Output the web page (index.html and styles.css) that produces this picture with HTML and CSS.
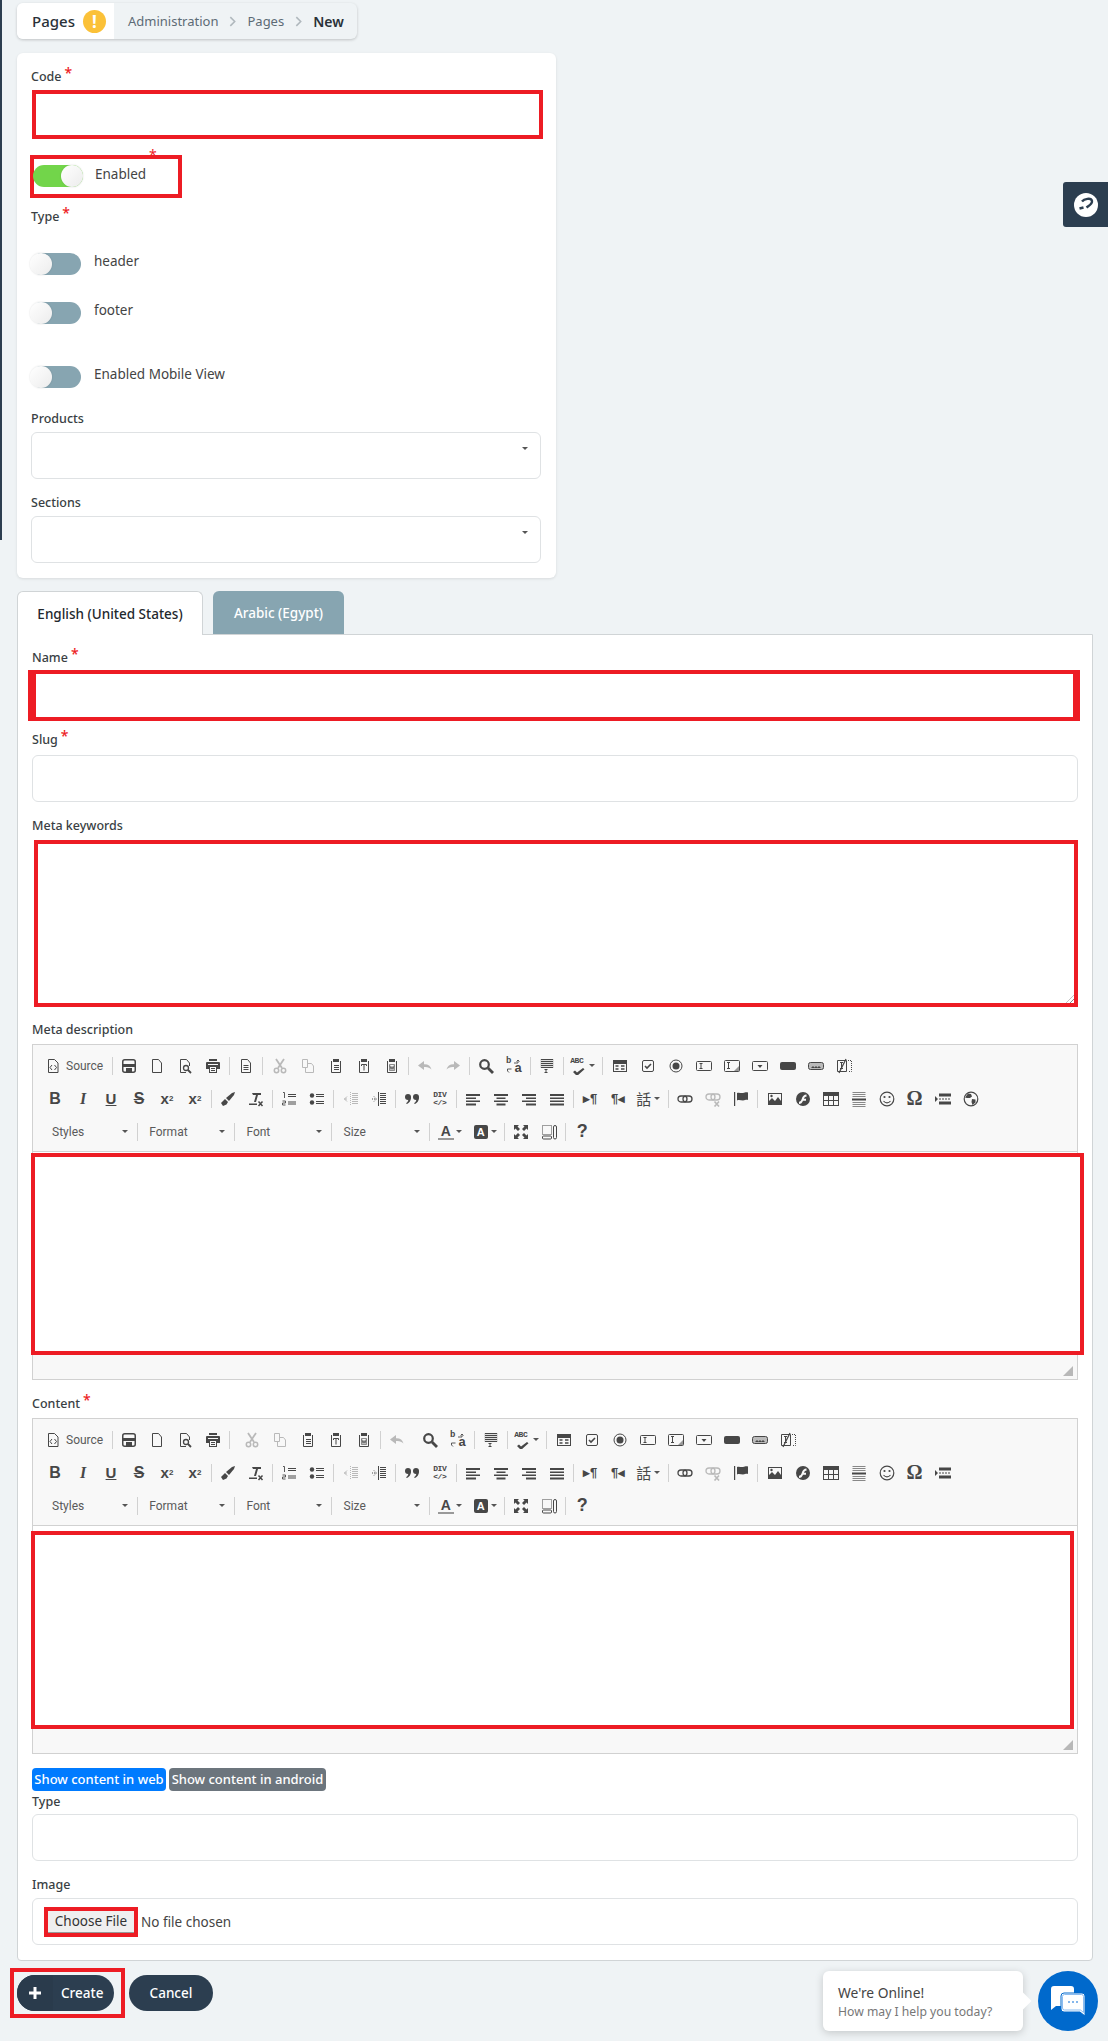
FILE: index.html
```html
<!DOCTYPE html>
<html lang="en">
<head>
  <meta charset="UTF-8" />
  <title>Pages - New</title>
  <link rel="stylesheet" href="styles.css">
</head>
<body>
  <!-- toolbar icons, used by both editors -->
  <svg class="defs" width="0" height="0">
    <symbol id="i-source" viewBox="0 0 16 16"><path d="M3.5 1.5h6l3.5 3.5v9.5H3.5z" fill="none" stroke="currentColor"/><path d="M7 7L5 9.5 7 12M9.5 7l2 2.5-2 2.5" fill="none" stroke="currentColor"/></symbol>
    <symbol id="i-save" viewBox="0 0 16 16"><rect x="1.75" y="1.75" width="12.5" height="12.5" rx="2" fill="none" stroke="currentColor" stroke-width="1.5"/><path d="M2 6h12v3H2zM5 10h6v4H5z"/></symbol>
    <symbol id="i-new" viewBox="0 0 16 16"><path d="M3.5 1.5h6l3 3.5v9.5h-9z" fill="none" stroke="currentColor"/></symbol>
    <symbol id="i-preview" viewBox="0 0 16 16"><path d="M9 14.5H3.5v-13h6l3 3.5v3" fill="none" stroke="currentColor"/><circle cx="9" cy="10" r="2.5" fill="none" stroke="currentColor" stroke-width="1.3"/><path d="M11 12l3 3" stroke="currentColor" stroke-width="1.8"/></symbol>
    <symbol id="i-print" viewBox="0 0 16 16"><path fill-rule="evenodd" d="M4 1h8v2H4zM2 4h12a1 1 0 0 1 1 1v6h-3v4H4v-4H1V5a1 1 0 0 1 1-1zM5 9v5h6V9zM3 6v1h10V6z"/><path d="M6 10.5h4M6 12.5h4" stroke="currentColor"/></symbol>
    <symbol id="i-templates" viewBox="0 0 16 16"><path d="M3.5 1.5h6l3 3.5v9.5h-9z" fill="none" stroke="currentColor"/><path d="M5.5 7.5h5M5.5 9.5h5M5.5 11.5h5" stroke="currentColor"/></symbol>
    <symbol id="i-cut" viewBox="0 0 16 16"><path d="M4 1l6 9M12 1L6 10" stroke="currentColor" stroke-width="1.8"/><circle cx="4.5" cy="12.5" r="2.2" fill="none" stroke="currentColor" stroke-width="1.5"/><circle cx="11.5" cy="12.5" r="2.2" fill="none" stroke="currentColor" stroke-width="1.5"/></symbol>
    <symbol id="i-copy" viewBox="0 0 16 16"><path d="M2.5 1.5h5v8h-5zM7.5 5.5h4l2 2.5v6.5h-8v-5" fill="none" stroke="currentColor"/></symbol>
    <symbol id="i-paste" viewBox="0 0 16 16"><path d="M3.5 3v11.5h9V3" fill="none" stroke="currentColor"/><path d="M5 1h6v3H5z"/><path d="M6 7.5h5M6 9.5h5M6 11.5h5" stroke="currentColor"/></symbol>
    <symbol id="i-paste-t" viewBox="0 0 16 16"><path d="M3.5 3v11.5h9V3" fill="none" stroke="currentColor"/><path d="M5 1h6v3H5z"/><path d="M5.5 8V6.5h5V8M8 6.5v6" fill="none" stroke="currentColor"/></symbol>
    <symbol id="i-paste-w" viewBox="0 0 16 16"><path d="M3.5 3v11.5h9V3" fill="none" stroke="currentColor"/><path d="M5 1h6v3H5z"/><path d="M5.5 6.5h5v6h-5z" fill="none" stroke="currentColor" stroke-width=".6"/><path d="M6 7.5l1 4 1-3 1 3 1-4" fill="none" stroke="currentColor" stroke-width=".8"/></symbol>
    <symbol id="i-undo" viewBox="0 0 16 16"><path d="M7 3v3.2c4-.2 6.5 1.6 7.5 5.3-1.8-2-4-2.8-7.5-2.5V12L1 7.5z"/></symbol>
    <symbol id="i-redo" viewBox="0 0 16 16"><path d="M9 3v3.2c-4-.2-6.5 1.6-7.5 5.3 1.8-2 4-2.8 7.5-2.5V12l6-4.5z"/></symbol>
    <symbol id="i-find" viewBox="0 0 16 16"><circle cx="6.5" cy="6.5" r="4.3" fill="none" stroke="currentColor" stroke-width="2.2"/><path d="M10 10l5 5" stroke="currentColor" stroke-width="2.8"/></symbol>
    <symbol id="i-swap" viewBox="0 0 16 16"><path d="M8 5h4V2.5M10.5 3.5L12 2l1.5 1.5M5.500 11H1.5v2M3 14.5L1.5 13" fill="none" stroke="currentColor" stroke-width=".9"/></symbol>
    <symbol id="i-selectall" viewBox="0 0 16 16"><path d="M1 1h14v9H1z" fill="#ddd"/><path d="M2 1.5h12M2 3.5h12M2 5.500h12M2 7.500h12M2 9.500h12" stroke="currentColor"/><path d="M5.500 11.500h3M7 11.500v3M5.500 14.500h3" fill="none" stroke="currentColor"/></symbol>
    <symbol id="i-check" viewBox="0 0 16 16"><path d="M3 11l2-1.500 2 2L13 7l1.500 1.200L7 15z"/></symbol>
    <symbol id="i-form" viewBox="0 0 16 16"><path fill-rule="evenodd" d="M1 2h14v12H1zM2 6v7h12V6z"/><path d="M3.500 8h3M3.500 11h3M9 8h3.500M9 11h3.500" stroke="currentColor" stroke-width="1.500"/></symbol>
    <symbol id="i-checkbox" viewBox="0 0 16 16"><rect x="2.500" y="2.500" width="11" height="11" rx="1.500" fill="none" stroke="currentColor"/><path d="M5 8l2 2 4-4" fill="none" stroke="currentColor" stroke-width="1.600"/></symbol>
    <symbol id="i-radio" viewBox="0 0 16 16"><circle cx="8" cy="8" r="6" fill="none" stroke="currentColor"/><circle cx="8" cy="8" r="3.500"/></symbol>
    <symbol id="i-textfield" viewBox="0 0 16 16"><rect x=".5" y="3.500" width="15" height="9" rx="1" fill="none" stroke="currentColor"/><path d="M3.500 5.500h3M5 5.500v5M3.500 10.500h3" fill="none" stroke="currentColor"/></symbol>
    <symbol id="i-textarea" viewBox="0 0 16 16"><rect x=".5" y="2.500" width="15" height="11" rx="1" fill="none" stroke="currentColor"/><path d="M3 4.500h3M4.500 4.500v6M3 10.500h3" fill="none" stroke="currentColor"/><path d="M10 13l5-5v5z" fill="#999"/></symbol>
    <symbol id="i-select" viewBox="0 0 16 16"><rect x=".5" y="3.500" width="15" height="9" rx="1" fill="none" stroke="currentColor"/><path d="M5.500 7h5L8 10z"/></symbol>
    <symbol id="i-button" viewBox="0 0 16 16"><rect y="4" width="16" height="8" rx="2"/></symbol>
    <symbol id="i-imagebutton" viewBox="0 0 16 16"><rect x=".5" y="4.500" width="15" height="7" rx="2" fill="#bbb" stroke="currentColor"/><path d="M3 10l2-2 1.500 1.500L8 8l1.500 1.500L11 8l2 2z"/></symbol>
    <symbol id="i-hidden" viewBox="0 0 16 16"><path d="M1.500 2.500h9v11h-9z" fill="none" stroke="currentColor"/><path d="M4 4.500h3M5.500 4.500v6M4 10.500h3" fill="none" stroke="currentColor"/><path d="M3 15l7-14" stroke="currentColor" stroke-width="1.200"/><path d="M12 2.500h3.500v11H12" fill="none" stroke="currentColor" stroke-dasharray="1 1"/></symbol>
    <symbol id="i-brush" viewBox="0 0 16 16"><path d="M1 12l4-4 3 3-1.500 2.500L3 15z"/><path d="M6 7l6-5 3-1-1 3-5 6z"/></symbol>
    <symbol id="i-remove" viewBox="0 0 16 16"><path d="M4 2h9v2h-3l-2 7H6l2-7H5zM1 12.500h8v1.500H1z"/><path d="M10.500 10.500l4 4.500M14.500 10.500l-4 4.500" stroke="currentColor" stroke-width="1.500"/></symbol>
    <symbol id="i-ol" viewBox="0 0 16 16"><path d="M7 3.500h8M7 5.500h8M7 11h8M7 13h8" stroke="currentColor"/><path d="M2 1.500h1.500V7M1.500 10h3v2h-3v2h3" fill="none" stroke="currentColor" stroke-width=".9"/></symbol>
    <symbol id="i-ul" viewBox="0 0 16 16"><circle cx="3" cy="4.500" r="2.200"/><circle cx="3" cy="11.500" r="2.200"/><path d="M7 3.500h8M7 5.500h8M7 10.500h8M7 12.500h8" stroke="currentColor"/></symbol>
    <symbol id="i-outdent" viewBox="0 0 16 16"><path d="M9 2.500h6M9 4.500h6M9 6.500h6M9 8.500h6M9 10.500h6M9 12.500h6" stroke="currentColor"/><path d="M7.500 1v14" stroke="currentColor" stroke-dasharray="1 1"/><path d="M1 8h3M4 5.500L1.500 8 4 10.500" fill="none" stroke="currentColor"/></symbol>
    <symbol id="i-indent" viewBox="0 0 16 16"><path d="M9 2.500h6M9 4.500h6M9 6.500h6M9 8.500h6M9 10.500h6M9 12.500h6" stroke="currentColor"/><path d="M7.500 1v14" stroke="currentColor"/><path d="M1 8h4M3 5.500L5.500 8 3 10.500" fill="none" stroke="currentColor" stroke-dasharray="1 1"/></symbol>
    <symbol id="i-quote" viewBox="0 0 16 16"><circle cx="4" cy="6" r="3"/><path d="M7 6c0 4-2 6-4 7l-1-.8C4 11 4.500 9 4.500 7z"/><circle cx="12" cy="6" r="3"/><path d="M15 6c0 4-2 6-4 7l-1-.8c2-1.200 2.500-3.200 2.500-5.200z"/></symbol>
    <symbol id="i-left" viewBox="0 0 16 16"><path d="M1 3h14v2H1zM1 6.500h10v1.500H1zM1 9.500h14v1.500H1zM1 12.500h10v2H1z"/></symbol>
    <symbol id="i-center" viewBox="0 0 16 16"><path d="M1 3h14v2H1zM3.500 6.500h9v1.500h-9zM1 9.500h14v1.500H1zM3.500 12.500h9v2h-9z"/></symbol>
    <symbol id="i-right" viewBox="0 0 16 16"><path d="M1 3h14v2H1zM5 6.500h10v1.500H5zM1 9.500h14v1.500H1zM5 12.500h10v2H5z"/></symbol>
    <symbol id="i-justify" viewBox="0 0 16 16"><path d="M1 3h14v2H1zM1 6.500h14v1.500H1zM1 9.500h14v1.500H1zM1 12.500h14v2H1z"/></symbol>
    <symbol id="i-link" viewBox="0 0 16 16"><rect x="1" y="5" width="9" height="6" rx="3" fill="none" stroke="currentColor" stroke-width="1.300"/><rect x="6" y="5" width="9" height="6" rx="3" fill="none" stroke="currentColor" stroke-width="1.300"/></symbol>
    <symbol id="i-unlink" viewBox="0 0 16 16"><rect x="1" y="3" width="9" height="6" rx="3" fill="none" stroke="currentColor" stroke-width="1.300"/><rect x="6" y="3" width="9" height="6" rx="3" fill="none" stroke="currentColor" stroke-width="1.300"/><path d="M9.500 10.500l4.500 5M14 10.500l-4.500 5" stroke="currentColor" stroke-width="1.600"/></symbol>
    <symbol id="i-anchor" viewBox="0 0 16 16"><path d="M1 1h1.200v14H1z"/><path d="M4 2c2-1 4 .5 6 0s3-1 5-.5v7.500c-2-.5-3 .5-5 .5s-4-1-6 0z"/></symbol>
    <symbol id="i-image" viewBox="0 0 16 16"><path fill-rule="evenodd" d="M1 2h14v12H1zM2 3v7l3-3 3 3 3-4 3 4V3z"/><circle cx="4.500" cy="5" r="1.200"/></symbol>
    <symbol id="i-flash" viewBox="0 0 16 16"><path fill-rule="evenodd" d="M8 1a7 7 0 1 0 0 14A7 7 0 0 0 8 1zm3.500 2.500v2.200c-1.600 0-2 .6-2.500 2h2v2H8c-.8 2-2 3.300-4 3.300v-2.200c1.500 0 2-1 2.700-2.800C7.600 5 9 3.500 11.500 3.500z"/></symbol>
    <symbol id="i-table" viewBox="0 0 16 16"><path fill-rule="evenodd" d="M0 1h16v14H0z M1 5v4h4V5z M6 5v4h4V5z M11 5v4h4V5z M1 10v4h4v-4z M6 10v4h4v-4z M11 10v4h4v-4z"/></symbol>
    <symbol id="i-hr" viewBox="0 0 16 16"><path d="M1.500 1.500h13M1.500 3.500h13M1.500 5.500h13M1.500 11.500h13M1.500 13.500h13M1.500 15.500h13" stroke="#888"/><path d="M1 7.500h14v2H1z"/></symbol>
    <symbol id="i-smiley" viewBox="0 0 16 16"><circle cx="8" cy="8" r="6.800" fill="none" stroke="currentColor" stroke-width="1.200"/><circle cx="5.500" cy="6" r="1.100"/><circle cx="10.500" cy="6" r="1.100"/><path d="M4.500 10c2 2.500 5 2.500 7 0" fill="none" stroke="currentColor" stroke-width="1.100"/></symbol>
    <symbol id="i-break" viewBox="0 0 16 16"><path d="M0 5v6l3-3zM4 2.500h12v3H4zM4 10.500h12v3H4z"/><path d="M4 8h12" stroke="currentColor" stroke-dasharray="2 1"/></symbol>
    <symbol id="i-globe" viewBox="0 0 16 16"><circle cx="8" cy="8" r="6.800" fill="none" stroke="currentColor" stroke-width="1.200"/><path d="M5 2.500l3 .5 1 2.500-2 1.500-3 0-2-.5zM9 8l3.500.5 0 3-3 2.500-1-3z"/></symbol>
    <symbol id="i-maximize" viewBox="0 0 16 16"><path d="M1 1h5L4.500 2.500 7 5 5 7 2.500 4.500 1 6zM15 1v5l-1.500-1.500L11 7 9 5l2.500-2.500L10 1zM1 15v-5l1.500 1.500L5 9l2 2-2.500 2.500L6 15zM15 15h-5l1.500-1.500L9 11l2-2 2.500 2.500L15 10z"/></symbol>
    <symbol id="i-blocks" viewBox="0 0 16 16"><path d="M1.500 1.500h9v9h-9z" fill="none" stroke="currentColor" stroke-dasharray="1 1"/><rect x="1.500" y="12" width="9" height="3" rx="1" fill="none" stroke="currentColor"/><rect x="12.500" y="1.500" width="3" height="13.500" rx="1.500" fill="none" stroke="currentColor"/></symbol>
  </svg>

  <div class="side-strip"></div>

  <div class="page">
    <div class="crumbs">
      <div class="crumbs-title">
        <span>Pages</span>
        <span class="alert-dot">!</span>
      </div>
      <div class="crumbs-path">
        <span>Administration</span>
        <svg class="crumb-arrow" viewBox="0 0 8 12"><path d="M1.500 1l5 5-5 5" fill="none" stroke="currentColor" stroke-width="1.800"/></svg>
        <span>Pages</span>
        <svg class="crumb-arrow" viewBox="0 0 8 12"><path d="M1.500 1l5 5-5 5" fill="none" stroke="currentColor" stroke-width="1.800"/></svg>
        <strong>New</strong>
      </div>
    </div>

    <div class="card">
      <label class="lbl">Code<span class="req">*</span></label>
      <div class="mark mark-code"></div>

      <div class="mark mark-enabled">
        <span class="req req-float">*</span>
        <span class="toggle on"></span>
        <span class="toggle-text">Enabled</span>
      </div>

      <label class="lbl lbl-type">Type<span class="req">*</span></label>
      <div class="toggle-row first">
        <span class="toggle"></span>
        <span class="toggle-text">header</span>
      </div>
      <div class="toggle-row">
        <span class="toggle"></span>
        <span class="toggle-text">footer</span>
      </div>
      <div class="toggle-row mobile">
        <span class="toggle"></span>
        <span class="toggle-text">Enabled Mobile View</span>
      </div>

      <label class="lbl lbl-products">Products</label>
      <div class="input select"><span class="caret"></span></div>
      <label class="lbl lbl-sections">Sections</label>
      <div class="input select"><span class="caret"></span></div>
    </div>

    <div class="tabs">
      <div class="tab active">English (United States)</div>
      <div class="tab">Arabic (Egypt)</div>
    </div>

    <div class="panel">
      <label class="lbl">Name<span class="req">*</span></label>
      <div class="mark mark-name"></div>

      <label class="lbl lbl-slug">Slug<span class="req">*</span></label>
      <div class="input input-slug"></div>

      <label class="lbl lbl-gap">Meta keywords</label>
      <div class="mark mark-keywords"><span class="grip"></span></div>

      <label class="lbl lbl-gap">Meta description</label>
      <div class="editor">
        <div class="toolbar">
          <div class="tb-row row-one">
            <span class="tb tb-source"><svg class="ico"><use href="#i-source"/></svg><span class="tb-text">Source</span></span>
            <i class="sep"></i>
            <span class="tb"><svg class="ico"><use href="#i-save"/></svg></span>
            <span class="tb"><svg class="ico"><use href="#i-new"/></svg></span>
            <span class="tb"><svg class="ico"><use href="#i-preview"/></svg></span>
            <span class="tb"><svg class="ico"><use href="#i-print"/></svg></span>
            <i class="sep"></i>
            <span class="tb"><svg class="ico"><use href="#i-templates"/></svg></span>
            <i class="sep"></i>
            <span class="tb off"><svg class="ico"><use href="#i-cut"/></svg></span>
            <span class="tb off"><svg class="ico"><use href="#i-copy"/></svg></span>
            <span class="tb"><svg class="ico"><use href="#i-paste"/></svg></span>
            <span class="tb"><svg class="ico"><use href="#i-paste-t"/></svg></span>
            <span class="tb"><svg class="ico"><use href="#i-paste-w"/></svg></span>
            <i class="sep"></i>
            <span class="tb off"><svg class="ico"><use href="#i-undo"/></svg></span>
            <span class="tb off"><svg class="ico"><use href="#i-redo"/></svg></span>
            <i class="sep"></i>
            <span class="tb"><svg class="ico"><use href="#i-find"/></svg></span>
            <span class="tb"><span class="swap"><span class="swap-b">b</span><span class="swap-a">a</span><svg class="ico"><use href="#i-swap"/></svg></span></span>
            <i class="sep"></i>
            <span class="tb"><svg class="ico"><use href="#i-selectall"/></svg></span>
            <i class="sep"></i>
            <span class="tb tb-drop"><span class="spell"><span class="spell-abc">ABC</span><svg class="ico"><use href="#i-check"/></svg></span><span class="caret"></span></span>
            <i class="sep"></i>
            <span class="tb"><svg class="ico"><use href="#i-form"/></svg></span>
            <span class="tb"><svg class="ico"><use href="#i-checkbox"/></svg></span>
            <span class="tb"><svg class="ico"><use href="#i-radio"/></svg></span>
            <span class="tb"><svg class="ico"><use href="#i-textfield"/></svg></span>
            <span class="tb"><svg class="ico"><use href="#i-textarea"/></svg></span>
            <span class="tb"><svg class="ico"><use href="#i-select"/></svg></span>
            <span class="tb"><svg class="ico"><use href="#i-button"/></svg></span>
            <span class="tb"><svg class="ico"><use href="#i-imagebutton"/></svg></span>
            <span class="tb"><svg class="ico"><use href="#i-hidden"/></svg></span>
          </div>
          <div class="tb-row row-two">
            <span class="tb glyph g-bold">B</span>
            <span class="tb glyph g-italic">I</span>
            <span class="tb glyph g-under">U</span>
            <span class="tb glyph g-strike">S</span>
            <span class="tb glyph g-script">x<sub>2</sub></span>
            <span class="tb glyph g-script">x<sup>2</sup></span>
            <i class="sep"></i>
            <span class="tb"><svg class="ico"><use href="#i-brush"/></svg></span>
            <span class="tb"><svg class="ico"><use href="#i-remove"/></svg></span>
            <i class="sep"></i>
            <span class="tb"><svg class="ico"><use href="#i-ol"/></svg></span>
            <span class="tb"><svg class="ico"><use href="#i-ul"/></svg></span>
            <i class="sep"></i>
            <span class="tb off"><svg class="ico"><use href="#i-outdent"/></svg></span>
            <span class="tb"><svg class="ico"><use href="#i-indent"/></svg></span>
            <i class="sep"></i>
            <span class="tb"><svg class="ico"><use href="#i-quote"/></svg></span>
            <span class="tb glyph g-div">DIV<br>&lt;/&gt;</span>
            <i class="sep"></i>
            <span class="tb"><svg class="ico"><use href="#i-left"/></svg></span>
            <span class="tb"><svg class="ico"><use href="#i-center"/></svg></span>
            <span class="tb"><svg class="ico"><use href="#i-right"/></svg></span>
            <span class="tb"><svg class="ico"><use href="#i-justify"/></svg></span>
            <i class="sep"></i>
            <span class="tb glyph g-para">&#9656;&para;</span>
            <span class="tb glyph g-para">&para;&#9666;</span>
            <span class="tb tb-drop"><span class="glyph g-lang">話</span><span class="caret"></span></span>
            <i class="sep"></i>
            <span class="tb"><svg class="ico"><use href="#i-link"/></svg></span>
            <span class="tb off"><svg class="ico"><use href="#i-unlink"/></svg></span>
            <span class="tb"><svg class="ico"><use href="#i-anchor"/></svg></span>
            <i class="sep"></i>
            <span class="tb"><svg class="ico"><use href="#i-image"/></svg></span>
            <span class="tb"><svg class="ico"><use href="#i-flash"/></svg></span>
            <span class="tb"><svg class="ico"><use href="#i-table"/></svg></span>
            <span class="tb"><svg class="ico"><use href="#i-hr"/></svg></span>
            <span class="tb"><svg class="ico"><use href="#i-smiley"/></svg></span>
            <span class="tb glyph g-omega">&Omega;</span>
            <span class="tb"><svg class="ico"><use href="#i-break"/></svg></span>
            <span class="tb"><svg class="ico"><use href="#i-globe"/></svg></span>
          </div>
          <div class="tb-row row-three">
            <span class="combo">Styles<span class="caret"></span></span>
            <i class="sep"></i>
            <span class="combo">Format<span class="caret"></span></span>
            <i class="sep"></i>
            <span class="combo">Font<span class="caret"></span></span>
            <i class="sep"></i>
            <span class="combo">Size<span class="caret"></span></span>
            <i class="sep"></i>
            <span class="tb tb-color"><span class="color-a">A</span><span class="caret"></span></span>
            <span class="tb tb-color"><span class="color-bg">A</span><span class="caret"></span></span>
            <i class="sep"></i>
            <span class="tb"><svg class="ico"><use href="#i-maximize"/></svg></span>
            <span class="tb"><svg class="ico"><use href="#i-blocks"/></svg></span>
            <i class="sep"></i>
            <span class="tb glyph g-help">?</span>
          </div>
        </div>
        <div class="mark mark-desc"></div>
        <div class="editor-foot"><span class="foot-grip"></span></div>
      </div>

      <label class="lbl lbl-gap">Content<span class="req">*</span></label>
      <div class="editor">
        <div class="toolbar">
          <div class="tb-row row-one">
            <span class="tb tb-source"><svg class="ico"><use href="#i-source"/></svg><span class="tb-text">Source</span></span>
            <i class="sep"></i>
            <span class="tb"><svg class="ico"><use href="#i-save"/></svg></span>
            <span class="tb"><svg class="ico"><use href="#i-new"/></svg></span>
            <span class="tb"><svg class="ico"><use href="#i-preview"/></svg></span>
            <span class="tb"><svg class="ico"><use href="#i-print"/></svg></span>
            <i class="sep"></i>
            <i class="sep ghost"></i>
            <span class="tb off"><svg class="ico"><use href="#i-cut"/></svg></span>
            <span class="tb off"><svg class="ico"><use href="#i-copy"/></svg></span>
            <span class="tb"><svg class="ico"><use href="#i-paste"/></svg></span>
            <span class="tb"><svg class="ico"><use href="#i-paste-t"/></svg></span>
            <span class="tb"><svg class="ico"><use href="#i-paste-w"/></svg></span>
            <i class="sep"></i>
            <span class="tb off"><svg class="ico"><use href="#i-undo"/></svg></span>
            <i class="sep ghost"></i>
            <span class="tb"><svg class="ico"><use href="#i-find"/></svg></span>
            <span class="tb"><span class="swap"><span class="swap-b">b</span><span class="swap-a">a</span><svg class="ico"><use href="#i-swap"/></svg></span></span>
            <i class="sep"></i>
            <span class="tb"><svg class="ico"><use href="#i-selectall"/></svg></span>
            <i class="sep"></i>
            <span class="tb tb-drop"><span class="spell"><span class="spell-abc">ABC</span><svg class="ico"><use href="#i-check"/></svg></span><span class="caret"></span></span>
            <i class="sep"></i>
            <span class="tb"><svg class="ico"><use href="#i-form"/></svg></span>
            <span class="tb"><svg class="ico"><use href="#i-checkbox"/></svg></span>
            <span class="tb"><svg class="ico"><use href="#i-radio"/></svg></span>
            <span class="tb"><svg class="ico"><use href="#i-textfield"/></svg></span>
            <span class="tb"><svg class="ico"><use href="#i-textarea"/></svg></span>
            <span class="tb"><svg class="ico"><use href="#i-select"/></svg></span>
            <span class="tb"><svg class="ico"><use href="#i-button"/></svg></span>
            <span class="tb"><svg class="ico"><use href="#i-imagebutton"/></svg></span>
            <span class="tb"><svg class="ico"><use href="#i-hidden"/></svg></span>
          </div>
          <div class="tb-row row-two">
            <span class="tb glyph g-bold">B</span>
            <span class="tb glyph g-italic">I</span>
            <span class="tb glyph g-under">U</span>
            <span class="tb glyph g-strike">S</span>
            <span class="tb glyph g-script">x<sub>2</sub></span>
            <span class="tb glyph g-script">x<sup>2</sup></span>
            <i class="sep"></i>
            <span class="tb"><svg class="ico"><use href="#i-brush"/></svg></span>
            <span class="tb"><svg class="ico"><use href="#i-remove"/></svg></span>
            <i class="sep"></i>
            <span class="tb"><svg class="ico"><use href="#i-ol"/></svg></span>
            <span class="tb"><svg class="ico"><use href="#i-ul"/></svg></span>
            <i class="sep"></i>
            <span class="tb off"><svg class="ico"><use href="#i-outdent"/></svg></span>
            <span class="tb"><svg class="ico"><use href="#i-indent"/></svg></span>
            <i class="sep"></i>
            <span class="tb"><svg class="ico"><use href="#i-quote"/></svg></span>
            <span class="tb glyph g-div">DIV<br>&lt;/&gt;</span>
            <i class="sep"></i>
            <span class="tb"><svg class="ico"><use href="#i-left"/></svg></span>
            <span class="tb"><svg class="ico"><use href="#i-center"/></svg></span>
            <span class="tb"><svg class="ico"><use href="#i-right"/></svg></span>
            <span class="tb"><svg class="ico"><use href="#i-justify"/></svg></span>
            <i class="sep"></i>
            <span class="tb glyph g-para">&#9656;&para;</span>
            <span class="tb glyph g-para">&para;&#9666;</span>
            <span class="tb tb-drop"><span class="glyph g-lang">話</span><span class="caret"></span></span>
            <i class="sep"></i>
            <span class="tb"><svg class="ico"><use href="#i-link"/></svg></span>
            <span class="tb off"><svg class="ico"><use href="#i-unlink"/></svg></span>
            <span class="tb"><svg class="ico"><use href="#i-anchor"/></svg></span>
            <i class="sep"></i>
            <span class="tb"><svg class="ico"><use href="#i-image"/></svg></span>
            <span class="tb"><svg class="ico"><use href="#i-flash"/></svg></span>
            <span class="tb"><svg class="ico"><use href="#i-table"/></svg></span>
            <span class="tb"><svg class="ico"><use href="#i-hr"/></svg></span>
            <span class="tb"><svg class="ico"><use href="#i-smiley"/></svg></span>
            <span class="tb glyph g-omega">&Omega;</span>
            <span class="tb"><svg class="ico"><use href="#i-break"/></svg></span>
          </div>
          <div class="tb-row row-three">
            <span class="combo">Styles<span class="caret"></span></span>
            <i class="sep"></i>
            <span class="combo">Format<span class="caret"></span></span>
            <i class="sep"></i>
            <span class="combo">Font<span class="caret"></span></span>
            <i class="sep"></i>
            <span class="combo">Size<span class="caret"></span></span>
            <i class="sep"></i>
            <span class="tb tb-color"><span class="color-a">A</span><span class="caret"></span></span>
            <span class="tb tb-color"><span class="color-bg">A</span><span class="caret"></span></span>
            <i class="sep"></i>
            <span class="tb"><svg class="ico"><use href="#i-maximize"/></svg></span>
            <span class="tb"><svg class="ico"><use href="#i-blocks"/></svg></span>
            <i class="sep"></i>
            <span class="tb glyph g-help">?</span>
          </div>
        </div>
        <div class="mark mark-content"></div>
        <div class="editor-foot"><span class="foot-grip"></span></div>
      </div>

      <div class="show-btns">
        <span class="show-btn web">Show content in web</span>
        <span class="show-btn android">Show content in android</span>
      </div>
      <label class="lbl lbl-type2">Type</label>
      <div class="input input-type"></div>
      <label class="lbl lbl-image">Image</label>
      <div class="input file-input">
        <div class="mark mark-file"><span class="file-btn">Choose File</span></div>
        <span class="file-none">No file chosen</span>
      </div>
    </div>

    <div class="actions">
      <div class="mark mark-create">
        <span class="btn btn-create">
          <span class="btn-plus"><svg viewBox="0 0 12 12" width="12" height="12"><path d="M4.500 0h3v4.500H12v3H7.500V12h-3V7.500H0v-3h4.500z" fill="#fff"/></svg></span>
          <span class="btn-label">Create</span>
        </span>
      </div>
      <span class="btn btn-cancel">Cancel</span>
    </div>
  </div>

  <!-- floating widgets -->
  <div class="help-tab">
    <svg viewBox="0 0 24 24" width="24" height="24"><circle cx="12" cy="12" r="12" fill="#fff"/><path d="M8 8.500C10 6 17 4 18 8c.5 3-3 4.500-5.500 6.500" fill="none" stroke="#2c3e50" stroke-width="2.400"/><path d="M5.500 15.500l4-1" stroke="#2c3e50" stroke-width="2.400"/></svg>
  </div>

  <div class="chat-bubble">
    <div class="chat-title">We're Online!</div>
    <div class="chat-sub">How may I help you today?</div>
  </div>
  <div class="chat-circle">
    <svg viewBox="0 0 34 30" width="34" height="30">
      <path d="M3 0h17a3 3 0 0 1 3 3v14a3 3 0 0 1-3 3H5l-5 4V3a3 3 0 0 1 3-3z" fill="#fff"/>
      <path d="M13 7h18a3 3 0 0 1 3 3v20l-5-4H13a3 3 0 0 1-3-3V10a3 3 0 0 1 3-3z" fill="#fff" stroke="#0069cc"/>
      <path d="M13.500 8.500h17a2 2 0 0 1 2 2v16l-3-2.500h-16a2 2 0 0 1-2-2v-11.500a2 2 0 0 1 2-2z" fill="#fff" stroke="#8dbdf0"/>
      <circle cx="18" cy="16" r="1" fill="#5d9fe6"/><circle cx="22" cy="16" r="1" fill="#5d9fe6"/><circle cx="26" cy="16" r="1" fill="#5d9fe6"/>
    </svg>
  </div>
</body>
</html>
```

FILE: styles.css
```css
* {
  box-sizing: border-box;
}

body {
  margin: 0;
  background: #eff3f5;
  font-family: "Noto Sans", "Open Sans", Arial, sans-serif;
  font-size: 13px;
  color: #3b4045;
}

.defs {
  position: absolute;
}

.side-strip {
  position: absolute;
  left: 0;
  top: 0;
  width: 2px;
  height: 540px;
  background: #2c3e50;
}

.page {
  padding: 3px 16px 0 17px;
}

/* === BREADCRUMB === */
.crumbs {
  display: flex;
  width: 340px;
  height: 36px;
  margin-bottom: 14px;
  background: #eff3f5;
  border-radius: 6px;
  box-shadow: 0 1px 3px rgba(0, 0, 0, 0.2);
  overflow: hidden;
}

.crumbs-title {
  display: flex;
  align-items: center;
  width: 97px;
  padding-left: 15px;
  gap: 8px;
  background: #fff;
  font-size: 15px;
  font-weight: 500;
  color: #2a3138;
}

.alert-dot {
  display: flex;
  align-items: center;
  justify-content: center;
  width: 23px;
  height: 23px;
  border-radius: 50%;
  background: #fbc138;
  color: #fff;
  font-weight: 700;
  font-size: 17px;
}

.crumbs-path {
  display: flex;
  align-items: center;
  gap: 11px;
  padding-left: 14px;
  color: #5d6b75;
}

.crumbs-path strong {
  color: #2a3138;
  font-size: 14px;
  font-weight: 600;
}

.crumb-arrow {
  width: 7px;
  height: 11px;
  color: #b0b8bd;
}

/* === LABELS AND INPUTS === */
.lbl {
  display: block;
  height: 20px;
  line-height: 20px;
  font-size: 12.5px;
  font-weight: 500;
  color: #3a3f44;
}

.req {
  color: #ed1c24;
  font-size: 14px;
  line-height: 0;
  margin-left: 3px;
  vertical-align: 3px;
}

.input {
  height: 47px;
  background: #fff;
  border: 1px solid #dfe2e4;
  border-radius: 6px;
}

.select {
  position: relative;
  width: 510px;
  margin-top: 3px;
}

.caret {
  display: inline-block;
  width: 0;
  height: 0;
  border-left: 3px solid transparent;
  border-right: 3px solid transparent;
  border-top: 3px solid #555;
}

.select .caret {
  position: absolute;
  right: 12px;
  top: 14px;
}

.mark {
  border: 4px solid #ed1c24;
  background: #fff;
}

/* === TOP CARD === */
.card {
  width: 539px;
  height: 525px;
  padding: 14px 14px 0;
  background: #fff;
  border-radius: 6px;
  box-shadow: 0 1px 3px rgba(0, 0, 0, 0.1);
}

.mark-code {
  width: 511px;
  height: 49px;
  margin: 3px 0 0 1px;
}

.mark-enabled {
  position: relative;
  display: flex;
  width: 152px;
  height: 43px;
  margin: 16px 0 0 -1px;
  padding-top: 6px;
}

.req-float {
  position: absolute;
  left: 115px;
  top: -4px;
  margin: 0;
}

.toggle {
  position: relative;
  flex: none;
  width: 50px;
  height: 22px;
  background: #87a5b1;
  border-radius: 11px;
}

.toggle::after {
  content: "";
  position: absolute;
  left: -1px;
  top: 0;
  width: 22px;
  height: 22px;
  border-radius: 50%;
  background: linear-gradient(135deg, #fff, #ececec);
  box-shadow: 0 0 2px rgba(0, 0, 0, 0.15);
}

.toggle.on {
  margin-left: -1px;
  background: #72d54a;
}

.toggle.on::after {
  left: auto;
  right: 0;
}

.toggle-text {
  margin-left: 13px;
  line-height: 17px;
  font-size: 13.5px;
  color: #444;
}

.mark-enabled .toggle-text {
  margin: 1px 0 0 12px;
}

.lbl-type {
  margin-top: 9px;
}

.toggle-row {
  display: flex;
  height: 22px;
  margin-top: 27px;
}

.toggle-row.first {
  margin-top: 26px;
}

.toggle-row.mobile {
  margin-top: 42px;
}

.lbl-products {
  margin-top: 21px;
}

.lbl-sections {
  margin-top: 14px;
}

/* === TABS === */
.tabs {
  display: flex;
  height: 43px;
  margin-top: 13px;
  gap: 10px;
}

.tab {
  width: 131px;
  height: 43px;
  padding-top: 13px;
  text-align: center;
  background: #87a5b1;
  border-radius: 6px 6px 0 0;
  color: #fff;
  font-size: 13.5px;
  font-weight: 500;
}

.tab.active {
  position: relative;
  z-index: 1;
  width: 186px;
  height: 44px;
  background: #fff;
  border: 1px solid #d0d4d6;
  border-bottom: 0;
  color: #23282d;
}

.panel {
  width: 1076px;
  height: 1327px;
  padding: 13px 14px 0 14px;
  background: #fff;
  border: 1px solid #d0d4d6;
  border-radius: 0 0 4px 4px;
}

.mark-name {
  width: 1052px;
  height: 51px;
  margin: 2px 0 0 -4px;
  border-width: 4px 7px 4px 8px;
}

.lbl-slug {
  margin-top: 9px;
}

.input-slug {
  margin-top: 5px;
}

.lbl-gap {
  margin-top: 14px;
}

.mark-keywords {
  position: relative;
  width: 1044px;
  height: 167px;
  margin: 4px 0 0 2px;
}

.lbl-gap + .mark-keywords + .lbl-gap {
  margin-top: 13px;
}

.grip {
  position: absolute;
  right: 0;
  bottom: 0;
  width: 8px;
  height: 8px;
  background: repeating-linear-gradient(135deg, transparent 0 2px, #888 2px 3px);
  clip-path: polygon(100% 0, 100% 100%, 0 100%);
}

/* === CKEDITOR === */
.editor {
  width: 1046px;
  height: 336px;
  margin-top: 4px;
  background: #fff;
  border: 1px solid #d1d1d1;
  display: flex;
  flex-direction: column;
}

.toolbar {
  flex: none;
  height: 107px;
  padding: 4px 0 3px;
  background: #f8f8f8;
  border-bottom: 1px solid #d1d1d1;
  font-family: Roboto, Arial, sans-serif;
  font-size: 12px;
  color: #474747;
}

.tb-row {
  display: flex;
  align-items: center;
  height: 33px;
}

.row-one {
  padding-left: 12px;
}

.row-two {
  padding-left: 8px;
}

.row-three {
  padding-left: 10px;
}

.tb {
  display: flex;
  align-items: center;
  justify-content: center;
  flex: none;
  width: 28px;
  height: 20px;
}

.tb.off {
  opacity: 0.35;
}

.ico {
  width: 16px;
  height: 16px;
  fill: currentColor;
}

.tb-source {
  width: 65px;
  justify-content: flex-start;
}

.tb-text {
  margin-left: 5px;
  color: #5a5a5a;
}

.sep {
  flex: none;
  width: 1px;
  height: 18px;
  margin: 0 2.1px;
  background: #d1d1d1;
}

.sep.ghost {
  visibility: hidden;
}

.swap {
  position: relative;
  display: block;
  width: 16px;
  height: 16px;
  font-family: "Liberation Mono", monospace;
  font-weight: 700;
}

.swap .ico {
  position: absolute;
  left: 0;
  top: 0;
}

.swap-b {
  position: absolute;
  left: 0;
  top: -1px;
  font-size: 9px;
  line-height: 9px;
}

.swap-a {
  position: absolute;
  right: 0;
  bottom: 0;
  font-size: 13px;
  line-height: 11px;
}

.glyph {
  color: #474747;
  font-family: "Liberation Sans", Arial, sans-serif;
}

.g-bold {
  font-size: 16px;
  font-weight: 700;
}

.g-italic {
  font-size: 16px;
  font-style: italic;
  font-weight: 700;
  font-family: "Liberation Serif", serif;
}

.g-under {
  font-size: 15px;
  font-weight: 700;
  text-decoration: underline;
}

.g-strike {
  font-size: 16px;
  font-weight: 700;
  text-decoration: line-through;
}

.g-script {
  font-size: 15px;
  font-weight: 700;
}

.g-script sub {
  font-size: 8px;
  line-height: 0;
  vertical-align: -3px;
}

.g-script sup {
  font-size: 8px;
  line-height: 0;
  vertical-align: 5px;
}

.g-div {
  font-size: 8px;
  line-height: 8px;
  letter-spacing: -0.5px;
  text-align: center;
  font-family: "Liberation Mono", monospace;
  font-weight: 700;
}

.g-para {
  font-size: 13px;
  font-weight: 700;
}

.g-lang {
  font-family: "Noto Sans CJK TC", sans-serif;
  font-size: 15px;
  line-height: 16px;
}

.g-omega {
  font-size: 20px;
  font-family: "Liberation Serif", serif;
  font-weight: 700;
}

.g-help {
  font-size: 18px;
  font-weight: 700;
}

.tb-drop {
  width: 34px;
  justify-content: flex-start;
  padding-left: 4px;
  gap: 3px;
}

.spell {
  position: relative;
  display: block;
  width: 16px;
  height: 18px;
  overflow: hidden;
}

.spell .ico {
  position: absolute;
  left: 0;
  top: 4px;
}

.spell-abc {
  position: absolute;
  left: 0;
  top: 0;
  font: 700 8px/8px "Liberation Mono", monospace;
  letter-spacing: -0.5px;
}

.combo {
  display: flex;
  align-items: center;
  justify-content: space-between;
  flex: none;
  width: 92px;
  padding: 0 7px 0 9px;
  color: #5a5a5a;
}

.tb-color {
  width: 35px;
  justify-content: flex-start;
  padding-left: 6px;
  gap: 2px;
}

.color-a {
  width: 16px;
  height: 16px;
  text-align: center;
  font: 700 14px/14px "Liberation Sans", Arial, sans-serif;
  border-bottom: 2px solid #999;
}

.color-bg {
  width: 14px;
  height: 14px;
  margin: 0 1px;
  text-align: center;
  font: 700 11px/14px "Liberation Sans", Arial, sans-serif;
  color: #fff;
  background: #474747;
  border-radius: 2px;
}

.mark-desc {
  flex: none;
  width: 1053px;
  height: 202px;
  margin: 1px 0 0 -2px;
}

.mark-content {
  flex: none;
  width: 1043px;
  height: 198px;
  margin: 5px 0 0 -2px;
}

.editor-foot {
  position: relative;
  flex: 1;
  background: #f8f8f8;
}

.foot-grip {
  position: absolute;
  right: 4px;
  bottom: 3px;
  width: 10px;
  height: 10px;
  background: #b8b8b8;
  clip-path: polygon(100% 0, 100% 100%, 0 100%);
}

/* === BOTTOM OF THE PANEL === */
.show-btns {
  display: flex;
  gap: 3px;
  margin-top: 14px;
}

.show-btn {
  height: 23px;
  line-height: 23px;
  border-radius: 4px;
  color: #fff;
  text-align: center;
  font-size: 13px;
  font-weight: 500;
}

.show-btn.web {
  width: 134px;
  background: #007bff;
}

.show-btn.android {
  width: 157px;
  background: #6c757d;
}

.lbl-type2 {
  margin-top: 1px;
}

.input-type {
  margin-top: 2px;
}

.lbl-image {
  margin-top: 14px;
}

.file-input {
  display: flex;
  align-items: center;
  margin-top: 3px;
  padding-left: 11px;
}

.mark-file {
  width: 94px;
  height: 30px;
  padding: 0;
}

.file-btn {
  display: block;
  width: 86px;
  height: 22px;
  line-height: 21px;
  text-align: center;
  background: #efefef;
  border-bottom: 1px solid #999;
  font-size: 13.5px;
  color: #333;
}

.file-none {
  margin-left: 3px;
  font-size: 13.5px;
  color: #444;
}

/* === ACTIONS === */
.actions {
  display: flex;
  align-items: center;
  margin-top: 7px;
}

.mark-create {
  display: flex;
  align-items: center;
  width: 115px;
  height: 50px;
  margin-left: -7px;
  padding-left: 3px;
  background: transparent;
}

.btn {
  display: flex;
  align-items: center;
  height: 36px;
  border-radius: 18px;
  background: #2c3e50;
  color: #fff;
  font-size: 13.5px;
  font-weight: 500;
}

.btn-create {
  width: 97px;
  overflow: hidden;
}

.btn-plus {
  display: flex;
  align-items: center;
  justify-content: center;
  width: 36px;
  height: 36px;
  background: #2a3b4c;
}

.btn-label {
  margin-left: 8px;
}

.btn-cancel {
  justify-content: center;
  width: 84px;
  margin-left: 4px;
}

/* === FLOATING === */
.help-tab {
  position: absolute;
  left: 1063px;
  top: 182px;
  width: 45px;
  height: 45px;
  display: flex;
  align-items: center;
  padding-left: 11px;
  background: #2c3e50;
  border-radius: 3px 0 0 3px;
}

.chat-bubble {
  position: absolute;
  left: 823px;
  top: 1971px;
  width: 200px;
  height: 60px;
  padding: 12px 15px;
  background: #fff;
  border-radius: 6px;
  box-shadow: 0 2px 8px rgba(0, 0, 0, 0.18);
}

.chat-bubble::after {
  content: "";
  position: absolute;
  right: -6px;
  top: 24px;
  width: 12px;
  height: 12px;
  background: #fff;
  transform: rotate(45deg);
}

.chat-title {
  font-size: 13.8px;
  line-height: 20px;
  color: #444;
}

.chat-sub {
  font-size: 12.2px;
  line-height: 18px;
  color: #777;
}

.chat-circle {
  position: absolute;
  left: 1038px;
  top: 1971px;
  width: 60px;
  height: 60px;
  display: flex;
  align-items: center;
  justify-content: center;
  border-radius: 50%;
  background: #0069cc;
}
```
